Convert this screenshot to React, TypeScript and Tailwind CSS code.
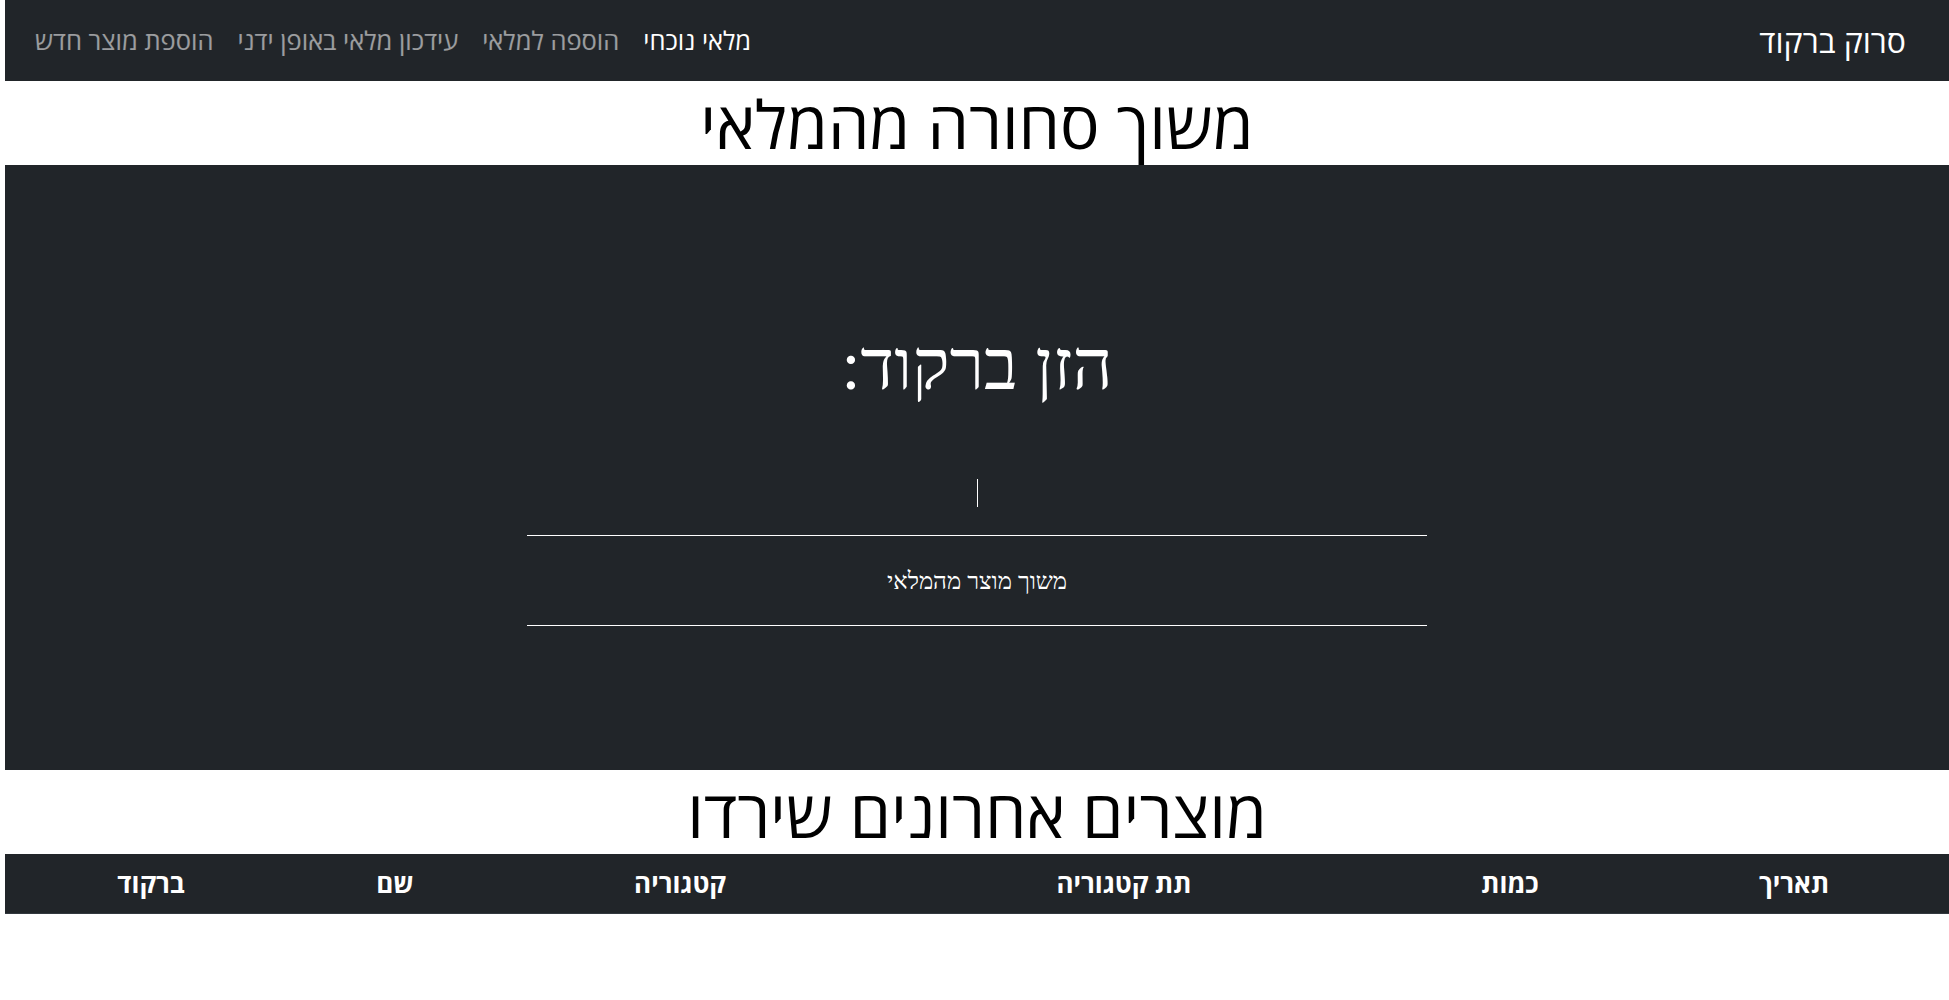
export default function App() {
  const navLinks = [
    { label: 'מלאי נוכחי', active: true },
    { label: 'הוספה למלאי', active: false },
    { label: 'עידכון מלאי באופן ידני', active: false },
    { label: 'הוספת מוצר חדש', active: false },
  ]
  const columns = ['תאריך', 'כמות', 'תת קטגוריה', 'קטגוריה', 'שם', 'ברקוד']

  return (
    <div
      dir="rtl"
      className="min-h-screen bg-white pl-[5px] font-['Open_Sans','Liberation_Sans',sans-serif]"
    >
      {/* Navbar */}
      <nav className="flex h-[81px] items-center bg-[#212529] pr-[43px] pl-[18px]">
        <span className="text-[32px] text-white">סרוק ברקוד</span>
        <div className="mr-auto flex items-center">
          {navLinks.map((l) => (
            <a
              key={l.label}
              className={
                l.active
                  ? 'px-[12px] text-[25.5px] text-white'
                  : 'px-[12px] text-[25.5px] text-white/55'
              }
            >
              {l.label}
            </a>
          ))}
        </div>
      </nav>

      <h1 className="text-center text-[66px] leading-[84px] font-normal text-black">
        משוך סחורה מהמלאי
      </h1>

      {/* Barcode scan area */}
      <section className="flex h-[605px] flex-col items-center bg-[#212529] pt-[159px]">
        <h2 className="font-['Liberation_Serif',serif] text-[70px] leading-[84px] text-white">
          הזן ברקוד:
        </h2>
        <div className="flex h-[128px] w-[900px] items-end justify-center border-b border-white pb-[28px]">
          <span className="h-[28px] w-px bg-white" />
        </div>
        <button className="flex h-[90px] w-[900px] items-center justify-center border-b border-white font-['Liberation_Serif',serif] text-[24px] text-white">
          משוך מוצר מהמלאי
        </button>
      </section>

      <h1 className="text-center text-[66px] leading-[84px] font-normal text-black">
        מוצרים אחרונים שירדו
      </h1>

      {/* Table header */}
      <div className="grid h-[60px] grid-cols-[310px_258px_514px_374px_196px_292px] items-center border-b border-[#32383e] bg-[#212529]">
        {columns.map((c) => (
          <div key={c} className="text-center text-[26px] font-bold text-white">
            {c}
          </div>
        ))}
      </div>
    </div>
  )
}
